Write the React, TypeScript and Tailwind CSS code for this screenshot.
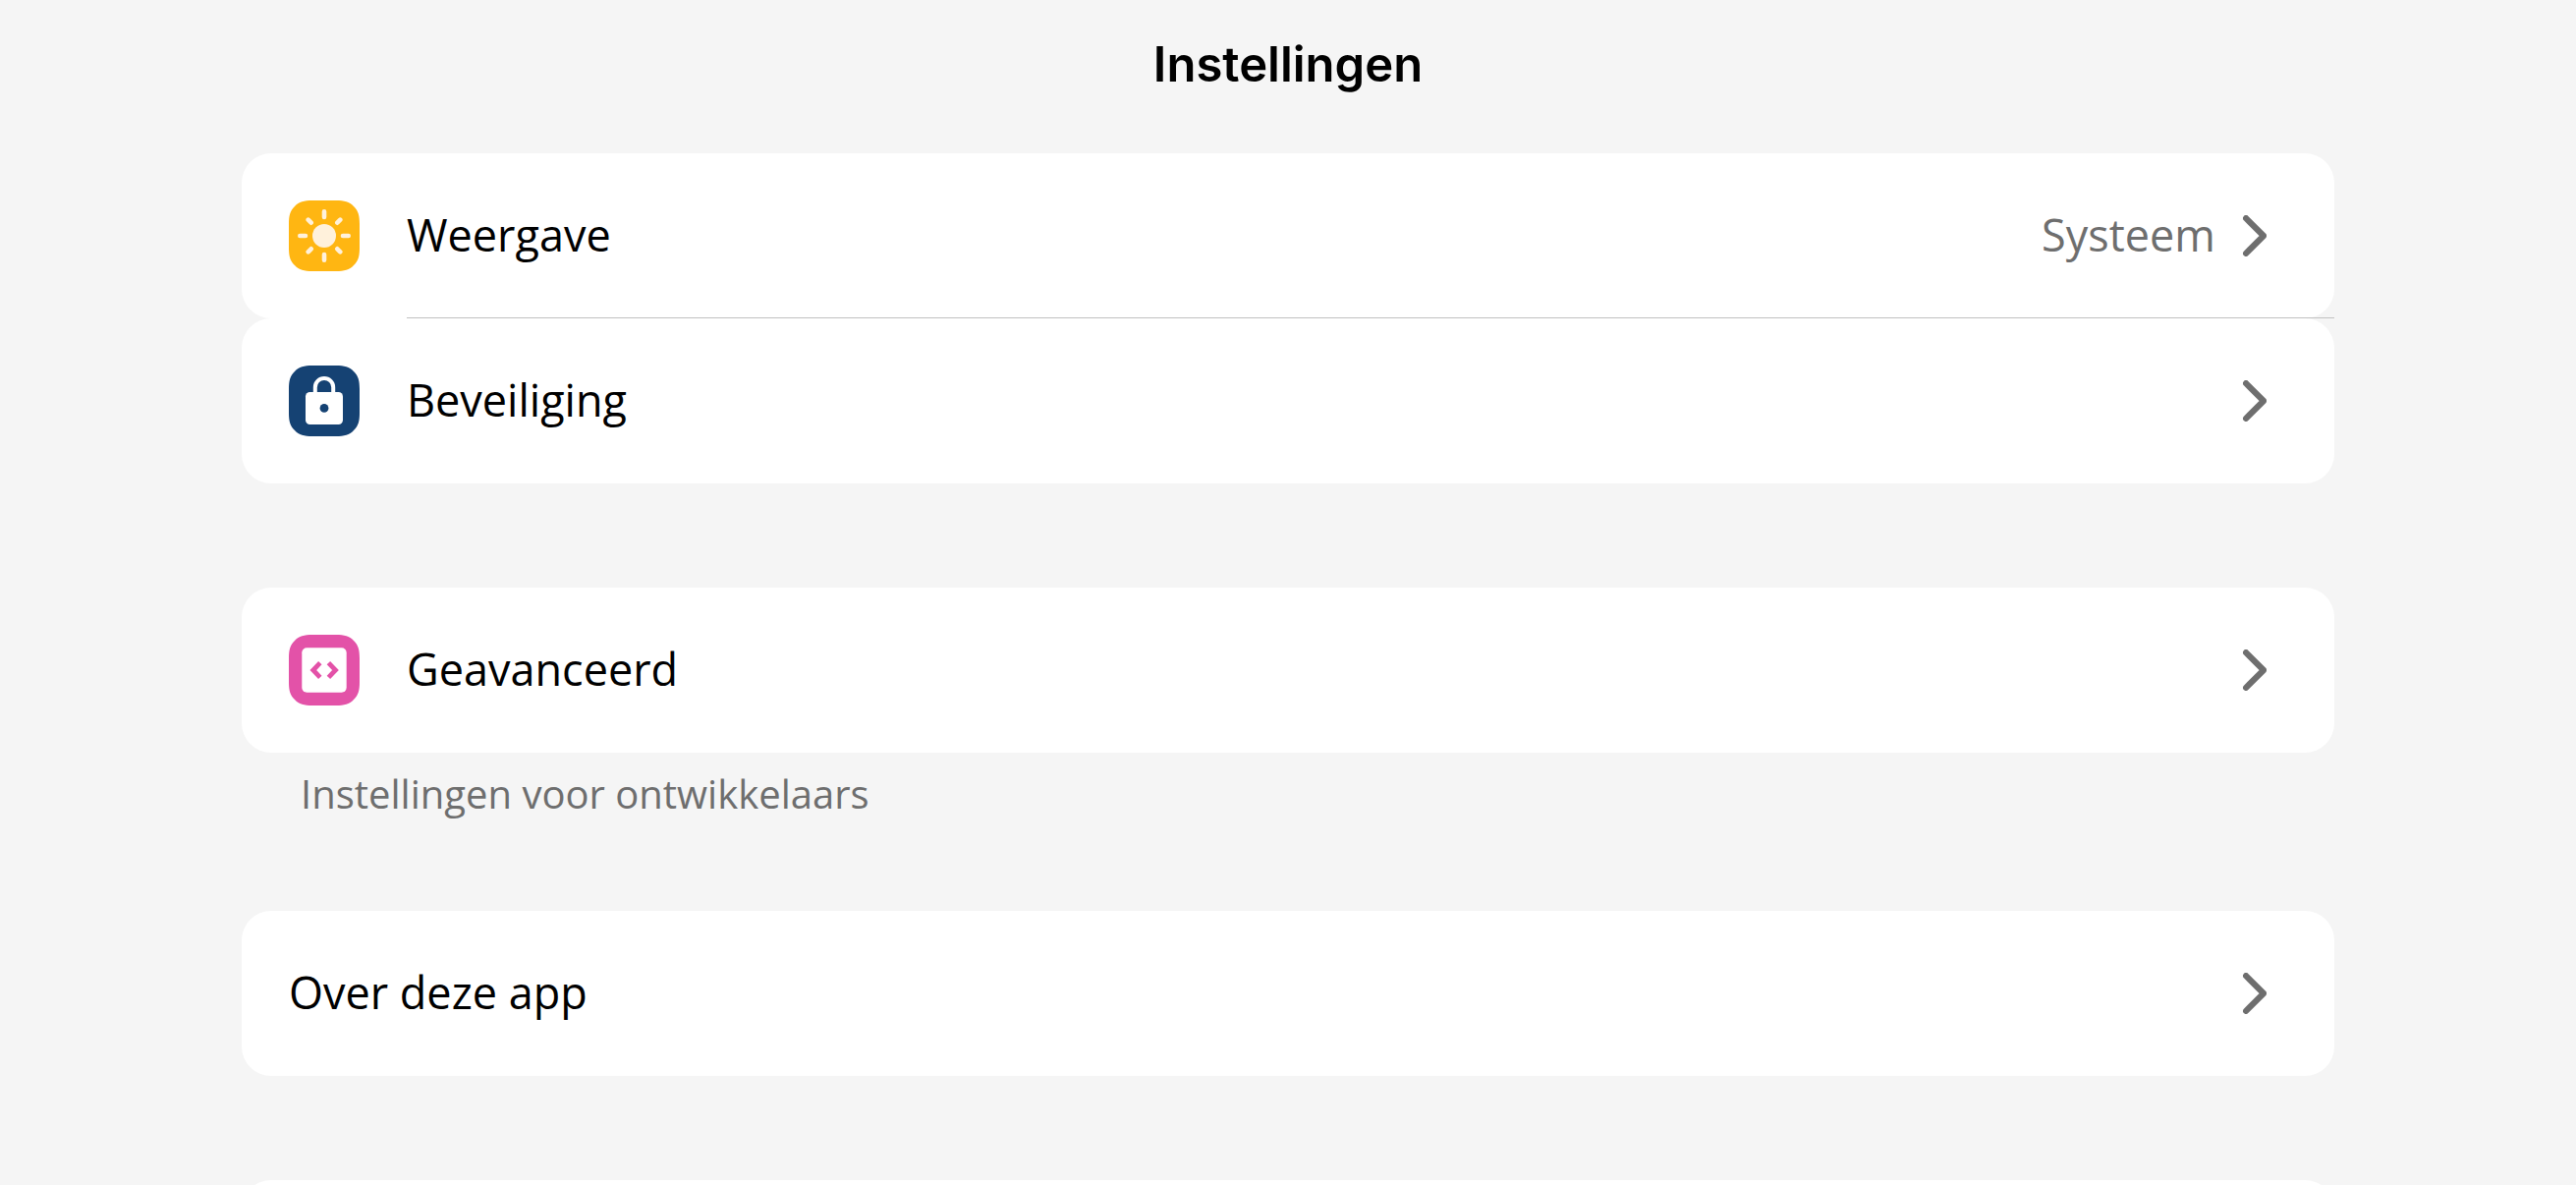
import type { ReactNode } from "react";

const SQUIRCLE =
  "M24 0H48C56.5 0 61.5 1.2 66 6C70.8 10.5 72 15.5 72 24V48C72 56.5 70.8 61.5 66 66C61.5 70.8 56.5 72 48 72H24C15.5 72 10.5 70.8 6 66C1.2 61.5 0 56.5 0 48V24C0 15.5 1.2 10.5 6 6C10.5 1.2 15.5 0 24 0Z";

function Tile({ color, children }: { color: string; children: ReactNode }) {
  return (
    <svg viewBox="0 0 72 72" className="size-18 shrink-0" fill="none" aria-hidden="true">
      <path d={SQUIRCLE} fill={color} />
      {children}
    </svg>
  );
}

function SunIcon() {
  return (
    <Tile color="#FFB612">
      <circle cx="36" cy="36" r="12" fill="#FFF1DB" />
      <path
        d="M36 11.3V17M36 55V60.7M11.3 36H17M55 36H60.7M19.7 19.7L22.7 22.7M49.3 49.3L52.3 52.3M52.3 19.7L49.3 22.7M22.7 49.3L19.7 52.3"
        stroke="#FFF1DB"
        strokeWidth="4.6"
        strokeLinecap="round"
      />
    </Tile>
  );
}

function LockIcon() {
  return (
    <Tile color="#154273">
      <path d="M26.8 29V22.2a9.2 9.2 0 0 1 18.4 0V29" stroke="#fff" strokeWidth="4" />
      <rect x="17" y="27" width="38" height="33" rx="4.5" fill="#fff" />
      <circle cx="36" cy="43.4" r="4.4" fill="#154273" />
    </Tile>
  );
}

function CodeIcon() {
  return (
    <Tile color="#E352A8">
      <rect x="13.3" y="13.3" width="45.4" height="45.4" rx="5" fill="#fff" />
      <path
        d="M31.8 28.7L24.8 36L31.8 43.3M40.4 28.7L47.5 36L40.4 43.3"
        stroke="#E352A8"
        strokeWidth="4.8"
      />
    </Tile>
  );
}

function Chevron() {
  return (
    <svg viewBox="0 0 24 42" className="mr-[21px] h-[42px] w-6 shrink-0" fill="none" aria-hidden="true">
      <path
        d="M3.1 3.1L21 21L3.1 38.9"
        stroke="#6E6E6E"
        strokeWidth="6.2"
        strokeLinecap="round"
        strokeLinejoin="round"
      />
    </svg>
  );
}

function Row({ icon, label, value }: { icon?: ReactNode; label: string; value?: string }) {
  return (
    <button
      type="button"
      className="flex h-42 w-full items-center gap-12 rounded-[30px] bg-white px-12 text-left"
    >
      {icon}
      <span className="flex-1 pb-0.5 text-[45px] leading-15 text-black">{label}</span>
      <span className="flex items-center gap-7">
        {value && <span className="pb-0.5 text-[45px] leading-15 text-[#6E6E6E]">{value}</span>}
        <Chevron />
      </span>
    </button>
  );
}

export default function App() {
  return (
    <div className="h-screen overflow-hidden bg-[#F5F5F5] px-[246px] font-['Open_Sans',sans-serif]">
      <header className="flex h-39 justify-center pt-9">
        <h1 className="font-['Inter',sans-serif] text-[49px] leading-15 font-semibold text-black">
          Instellingen
        </h1>
      </header>
      <main>
        <section>
          <div className="relative">
            <Row icon={<SunIcon />} label="Weergave" value="Systeem" />
            <div className="absolute right-0 bottom-0 left-42 h-px bg-[#C1C1C1]" />
          </div>
          <Row icon={<LockIcon />} label="Beveiliging" />
        </section>
        <section className="mt-[106px]">
          <Row icon={<CodeIcon />} label="Geavanceerd" />
          <p className="px-15 pt-3.5 text-[40px] leading-14 text-[#6E6E6E]">
            Instellingen voor ontwikkelaars
          </p>
        </section>
        <section className="mt-[91px]">
          <Row label="Over deze app" />
        </section>
        <section className="mt-[106px]">
          <div className="h-42 rounded-[30px] bg-white" />
        </section>
      </main>
    </div>
  );
}
